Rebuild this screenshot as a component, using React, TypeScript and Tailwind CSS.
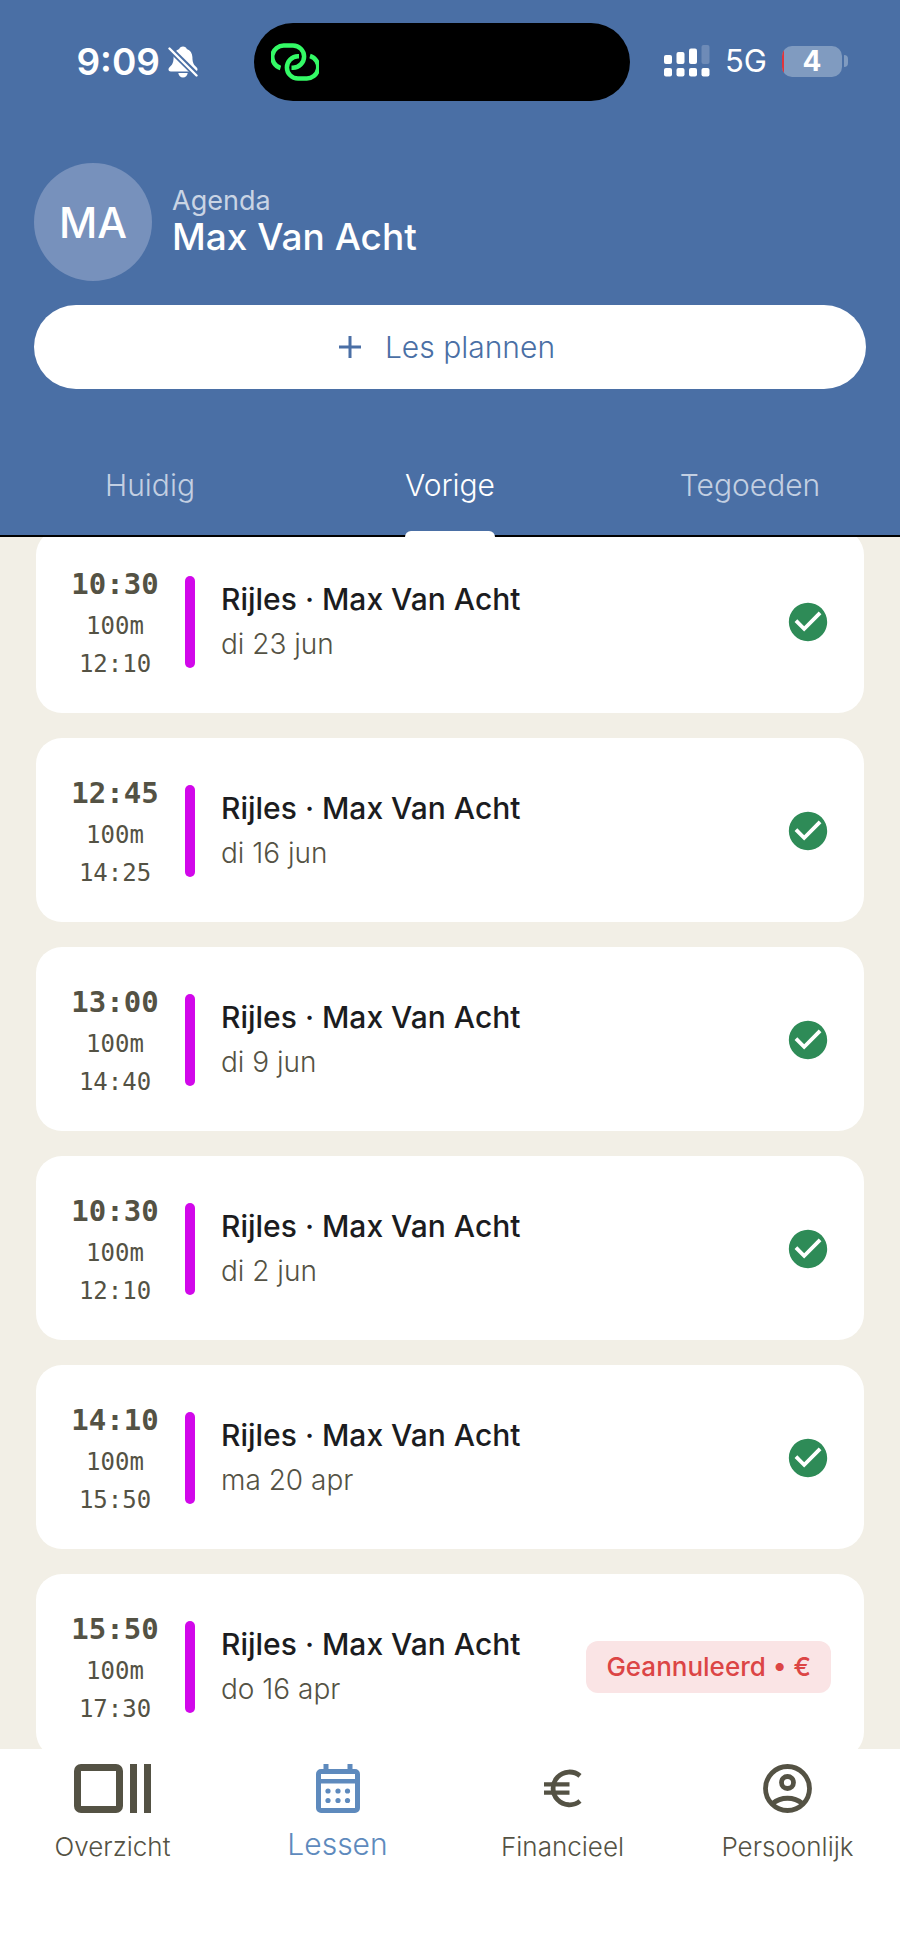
import { useState } from "react";
import type { ReactNode } from "react";
import { MdCheckCircle } from "react-icons/md";

interface Lesson {
  start: string;
  duration: string;
  end: string;
  date: string;
  cancelled?: boolean;
}

const LESSONS: Lesson[] = [
  { start: "10:30", duration: "100m", end: "12:10", date: "di 23 jun" },
  { start: "12:45", duration: "100m", end: "14:25", date: "di 16 jun" },
  { start: "13:00", duration: "100m", end: "14:40", date: "di 9 jun" },
  { start: "10:30", duration: "100m", end: "12:10", date: "di 2 jun" },
  { start: "14:10", duration: "100m", end: "15:50", date: "ma 20 apr" },
  { start: "15:50", duration: "100m", end: "17:30", date: "do 16 apr", cancelled: true },
];

const TABS = ["Huidig", "Vorige", "Tegoeden"] as const;

function BellOffIcon() {
  return (
    <svg viewBox="0 0 30 32" className="h-8 w-[30px]" aria-hidden="true">
      <path
        fill="white"
        d="M15 0.5c-2 0-3.400 1.200-3.800 2.400-3.600 1.200-5.500 4.300-5.600 8.200-.1 5-.9 7.400-3.600 9.700C.8 21.900.5 22.600.5 23.500c0 1.300.9 2 2.300 2h24.400c.6 0 1-.1 1.400-.4.6-.4.9-.9.9-1.600 0-.9-.3-1.600-1.500-2.700-2.700-2.300-3.500-4.700-3.600-9.700-.1-3.900-2-7-5.600-8.200C18.400 1.700 17 .5 15 .5zM10.300 27c.3 2.500 2.200 4.500 4.700 4.500s4.400-2 4.700-4.500z"
      />
      <path d="M1 2 30 30.500" stroke="#4a6fa5" strokeWidth="6" />
      <path d="M1.500 2.500 28.500 29.500" stroke="white" strokeWidth="2.400" strokeLinecap="round" />
    </svg>
  );
}

function LinkIcon() {
  return (
    <svg viewBox="0 0 48 38" className="h-[38px] w-12" fill="none" stroke="#34fa66" strokeWidth="4.500" aria-hidden="true">
      <path d="M9.500 25A11.500 11.500 0 0 1 13.500 2.500H22A11.100 11.100 0 0 1 22 24.700H20.500" />
      <path d="M28 13.300H27A11.100 11.100 0 0 0 27 35.500H35A11.500 11.500 0 0 0 39 13" />
    </svg>
  );
}

function SignalIcon() {
  return (
    <svg viewBox="0 0 46 32" className="h-8 w-[46px]" fill="white" aria-hidden="true">
      <rect x="0" y="10" width="8" height="9" rx="2" />
      <rect x="12.500" y="7" width="8" height="12" rx="2" />
      <rect x="25" y="3.500" width="8" height="15.500" rx="2" />
      <rect x="37.500" y="0" width="8" height="19" rx="2" opacity="0.200" />
      <rect x="0" y="23" width="8" height="8.500" rx="2" />
      <rect x="12.500" y="23" width="8" height="8.500" rx="2" />
      <rect x="25" y="23" width="8" height="8.500" rx="2" />
      <rect x="37.500" y="23" width="8" height="8.500" rx="2" />
    </svg>
  );
}

function OverviewIcon() {
  return (
    <svg viewBox="0 0 77 49" className="h-[49px] w-[77px]" aria-hidden="true">
      <rect x="3.500" y="3.500" width="42" height="42" rx="3.500" fill="none" stroke="currentColor" strokeWidth="7" />
      <path d="M56 0h7v49h-7zM70 0h7v49h-7z" fill="currentColor" />
    </svg>
  );
}

function CalendarIcon() {
  return (
    <svg viewBox="0 0 44 49" className="h-[49px] w-11" aria-hidden="true">
      <rect x="2.500" y="7.500" width="39" height="39" rx="2.500" fill="none" stroke="currentColor" strokeWidth="5" />
      <path d="M7.500 0h5v6h-5zM31.500 0h5v6h-5zM3 15h38v4.500H3z" fill="currentColor" />
      <g fill="currentColor">
        <circle cx="12" cy="27" r="2.600" />
        <circle cx="22" cy="27" r="2.600" />
        <circle cx="31.500" cy="27" r="2.600" />
        <circle cx="12" cy="36.500" r="2.600" />
        <circle cx="22" cy="36.500" r="2.600" />
        <circle cx="31.500" cy="36.500" r="2.600" />
      </g>
    </svg>
  );
}

function EuroIcon() {
  return (
    <svg viewBox="0 0 38 49" className="h-[49px] w-[38px]" fill="none" stroke="currentColor" strokeWidth="4.800" aria-hidden="true">
      <path d="M36 11.800A16.400 16.400 0 1 0 36 37" />
      <path d="M0 20.300h25.500M0 28.600h25.500" strokeWidth="4.200" />
    </svg>
  );
}

function PersonIcon() {
  return (
    <svg viewBox="0 0 49 49" className="h-[49px] w-[49px]" fill="none" stroke="currentColor" strokeWidth="4.800" aria-hidden="true">
      <circle cx="24.500" cy="24.500" r="22" />
      <circle cx="24.500" cy="18.500" r="6" />
      <path d="M9.500 39.500C18 32.500 31 32.500 39.500 39.500" />
    </svg>
  );
}

const NAV: { label: string; icon: ReactNode; active?: boolean }[] = [
  { label: "Overzicht", icon: <OverviewIcon /> },
  { label: "Lessen", icon: <CalendarIcon />, active: true },
  { label: "Financieel", icon: <EuroIcon /> },
  { label: "Persoonlijk", icon: <PersonIcon /> },
];

function StatusBar() {
  return (
    <div className="grid grid-cols-[1fr_376px_1fr] items-center pt-[23px] pr-4 text-white">
      <div className="flex items-center justify-end gap-2 pr-14">
        <span className="text-[37px] leading-10 font-semibold">9:09</span>
        <BellOffIcon />
      </div>
      <div className="flex h-[78px] items-center rounded-full bg-black pl-[17px]">
        <LinkIcon />
      </div>
      <div className="flex items-center gap-[15px] pb-0.5 pl-[34px]">
        <SignalIcon />
        <span className="text-[31px] leading-8">5G</span>
        <div className="flex items-center gap-0.5">
          <div className="relative flex h-[31px] w-[60px] items-center justify-center overflow-hidden rounded-[10px] bg-[#809bc0] text-[28px] leading-8 font-bold">
            <span className="absolute inset-y-1 left-0 w-0.5 bg-[#e0343b]" />
            4
          </div>
          <div className="h-3 w-1 rounded-r-full bg-[#809bc0]" />
        </div>
      </div>
    </div>
  );
}

function LessonCard({ lesson }: { lesson: Lesson }) {
  return (
    <li className="flex items-center rounded-[26px] bg-white pt-8 pr-[33px] pb-[30px] pl-[34px]">
      <div className="w-[90px] text-center font-['DejaVu_Sans_Mono',monospace] text-2xl leading-[38px] text-[#545244]">
        <div className="text-[29px] leading-[46px] font-bold">{lesson.start}</div>
        <div>{lesson.duration}</div>
        <div>{lesson.end}</div>
      </div>
      <div className="ml-[25px] h-[92px] w-2.5 rounded-full bg-[#d108ea]" />
      <div className="ml-[26px] flex-1 leading-[45px]">
        <h2 className="text-[30px] font-medium text-[#1b1c20]">Rijles · Max Van Acht</h2>
        <p className="text-[28px] font-[350] text-[#545244]">{lesson.date}</p>
      </div>
      {lesson.cancelled ? (
        <span className="rounded-xl bg-[#fae4e5] px-5 text-[26px] leading-[52px] font-medium text-[#dc4545]">
          Geannuleerd • €
        </span>
      ) : (
        <MdCheckCircle className="size-[46px] text-[#2e8b57]" aria-label="Voltooid" />
      )}
    </li>
  );
}

export default function App() {
  const [tab, setTab] = useState<(typeof TABS)[number]>("Vorige");

  return (
    <div className="flex h-screen flex-col bg-[#f2efe6] font-['Inter',sans-serif]">
      <header className="relative z-10 border-b-2 border-black bg-[#4a6fa5]">
        <StatusBar />

        <div className="flex items-center gap-5 px-[34px] pt-[62px]">
          <div className="flex size-[118px] items-center justify-center rounded-full bg-[#7791bc] text-[42px] font-medium text-white">
            MA
          </div>
          <div className="pb-1.5 leading-9">
            <p className="text-[27px] text-[#c9d4e4]">Agenda</p>
            <h1 className="text-[37px] font-medium text-white">Max Van Acht</h1>
          </div>
        </div>

        <div className="px-[34px] pt-6">
          <button
            type="button"
            className="flex h-[84px] w-full items-center justify-center gap-6 rounded-full bg-white pr-1.5 text-[30px] font-[350] text-[#4a6fa5]"
          >
            <svg viewBox="0 0 22 22" className="size-[22px]" stroke="currentColor" strokeWidth="3" aria-hidden="true">
              <path d="M11 0v22M0 11h22" />
            </svg>
            Les plannen
          </button>
        </div>

        <div role="tablist" className="grid grid-cols-3 pt-[46px]">
          {TABS.map((t) => (
            <button
              key={t}
              type="button"
              role="tab"
              aria-selected={tab === t}
              onClick={() => setTab(t)}
              className={`relative flex h-[100px] items-center justify-center text-[30px] font-[350] ${
                tab === t ? "text-white" : "text-[#c3cfe2]"
              }`}
            >
              {t}
              {tab === t && <span className="absolute -bottom-[3px] h-[7px] w-[90px] rounded-t-md bg-white" />}
            </button>
          ))}
        </div>
      </header>

      <main className="-mt-2 min-h-0 flex-1 overflow-hidden px-9">
        <ul className="space-y-[25px]">
          {LESSONS.map((l) => (
            <LessonCard key={l.date} lesson={l} />
          ))}
        </ul>
      </main>

      <nav className="grid grid-cols-4 bg-white pt-[15px] pb-20">
        {NAV.map((n) => (
          <a
            key={n.label}
            href="#"
            aria-current={n.active ? "page" : undefined}
            className={`flex flex-col items-center gap-2.5 font-[350] ${n.active ? "text-[#5e8abd]" : "text-[#545244]"}`}
          >
            {n.icon}
            <span className={n.active ? "text-[30px] leading-[42px]" : "text-[26px] leading-[47px]"}>{n.label}</span>
          </a>
        ))}
      </nav>
    </div>
  );
}
